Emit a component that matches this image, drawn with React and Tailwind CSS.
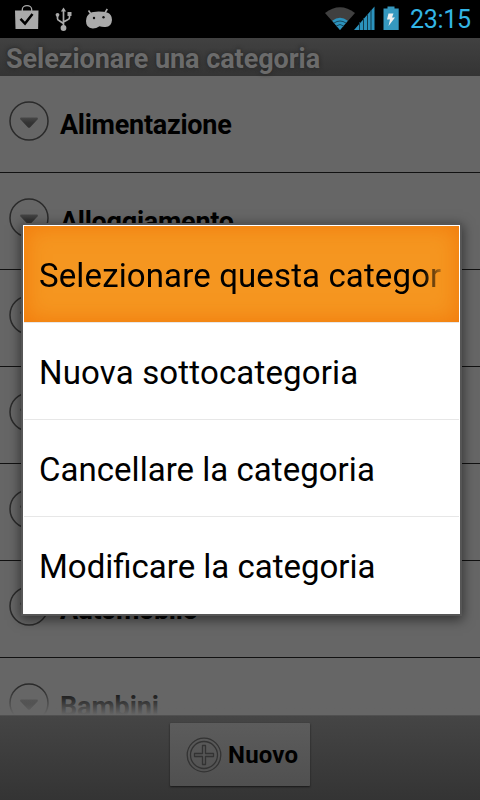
const categories = [
  { name: 'Alimentazione', tracking: 'tracking-[-0.270px]' },
  { name: 'Alloggiamento', tracking: 'tracking-[-0.270px]' },
  { name: 'Animali', tracking: 'tracking-[-0.200px]' },
  { name: 'Assicurazione', tracking: 'tracking-[-0.200px]' },
  { name: 'Attività', tracking: 'tracking-[-0.200px]' },
  { name: 'Automobile', tracking: 'tracking-[-0.300px]' },
  { name: 'Bambini', tracking: 'tracking-[-0.150px]' },
];
const actions = [
  { label: 'Nuova sottocategoria', tracking: 'tracking-[0.160px]' },
  { label: 'Cancellare la categoria', tracking: 'tracking-[0.030px]' },
  { label: 'Modificare la categoria', tracking: 'tracking-normal' },
];

function ExpandIcon() {
  return (
    <svg className="ml-[9px] h-10 w-10 shrink-0" viewBox="0 0 40 40">
      <defs>
        <linearGradient id="arrow" x1="0" y1="0" x2="0" y2="1">
          <stop offset="0" stopColor="#474747" />
          <stop offset="0.500" stopColor="#343434" />
          <stop offset="1" stopColor="#303030" />
        </linearGradient>
      </defs>
      <circle cx="20" cy="20" r="19" fill="none" stroke="#2a2a2a" strokeWidth="1.500" />
      <path d="M11.700 16.500H28.300Q29.500 17 28.500 18.500L21.200 26.200Q20 27.300 18.800 26.200L11.500 18.500Q10.500 17 11.700 16.500z" fill="url(#arrow)" />
    </svg>
  );
}

function StatusBar() {
  return (
    <div className="flex h-[38px] shrink-0 bg-black">
      <svg className="h-[38px] w-[120px]" viewBox="0 0 120 38">
        <path d="M22.300 11v-1.500a4.700 3.800 0 0 1 9.400 0V11" fill="none" stroke="#aaa" strokeWidth="1.300" />
        <path d="M15 10.500h23.500l-.4 18.500H15.500z" fill="#aaa" />
        <path d="M20.500 18.800l4.500 4.700 7.500-9.500" fill="none" stroke="#000" strokeWidth="2.500" />
        <g fill="none" stroke="#aaa" strokeWidth="1.700">
          <path d="M63.500 11v16M57.500 15v3.500q0 1.500 1.500 2l4.500 3M69.500 14v3.500q0 1.500-1.500 2l-4.500 2.500" />
        </g>
        <path d="M63.500 7.500l2.600 4h-5.200z" fill="#aaa" />
        <circle cx="63.500" cy="28" r="2.900" fill="#aaa" />
        <circle cx="57.500" cy="14.800" r="1.900" fill="#aaa" />
        <rect x="67.500" y="12" width="4" height="4" fill="#aaa" />
        <path d="M88.500 10.500l2.800 4M107.300 9l-2.800 4.500" stroke="#aaa" strokeWidth="1.600" />
        <path d="M90.500 13Q93 11.500 98.500 11.500T107 12.500Q112 14 112 20Q111.500 26.800 105.500 27Q102 27.200 99.500 26.200Q96 28.700 92.500 28.500Q86 28 86 21Q86 15.500 90.500 13z" fill="#aaa" />
        <circle cx="94" cy="18" r="1.200" fill="#111" />
        <circle cx="103.500" cy="17.300" r="1.200" fill="#111" />
      </svg>
      <svg className="ml-auto h-[38px] w-[80px]" viewBox="324 0 80 38">
        <path d="M325 13Q340 1.500 355 13L340 30z" fill="#404040" />
        <path d="M332.200 20.800q7.800-6 15.600 0L340 30z" fill="#2b92bd" />
        <path d="M334 23q6-4 12 0M336.200 26q3.800-3 7.600 0" fill="none" stroke="#16475b" strokeWidth="1" />
        <path d="M354 30L374.500 6.500V30z" fill="#2b92bd" />
        <path d="M359.500 22v8M363.500 18v12M367.500 14v16M371 10v20" stroke="#113b4c" strokeWidth="1" />
        <path d="M383.500 8.500h4V6.500h7v2h4.200v21.500h-15.200z" fill="#3598bf" />
        <path d="M388.500 13.500h5l-1.500 4h3l-6.500 8.500 1.500-6.500h-3z" fill="#eee" />
      </svg>
      <div className="w-[76px] pl-[6px] text-[25px] leading-[39px] tracking-[-0.300px] whitespace-nowrap text-[#33b5e5]">23:15</div>
    </div>
  );
}

function ContextMenu() {
  return (
    <div className="absolute top-[223px] left-[21px] h-[393px] w-[441px] border-2 border-[#565656] bg-white text-[33px] text-black shadow-[0_3px_11px_1px_rgba(0,0,0,0.500)]">
      <div className="mx-px flex h-[97px] items-center bg-[#f59620] px-[15px] shadow-[inset_0_1px_0_#fff,inset_0_0_22px_2px_#f27b0c]">
        <div className="w-[406px] bg-[linear-gradient(to_right,#000_384px,transparent_408px)] bg-clip-text pt-1 tracking-[0.130px] whitespace-nowrap text-transparent">
          Selezionare questa categor
        </div>
      </div>
      {actions.map(({ label, tracking }) => (
        <div key={label} className="mx-px flex h-[97px] items-center border-t border-[#e7e7e7] pl-[15px] whitespace-nowrap">
          <span className={`pt-1 ${tracking}`}>{label}</span>
        </div>
      ))}
    </div>
  );
}

export default function App() {
  return (
    <div className="relative flex h-[800px] w-[480px] flex-col overflow-hidden bg-[#666] font-[Roboto,sans-serif]">
      <StatusBar />
      <div className="h-[38px] shrink-0 bg-linear-to-b from-[#414141] to-[#343434] pl-[6px] text-[27px] leading-[42px] font-bold tracking-[-0.050px] text-[#6b6b6b] [text-shadow:0_0_4px_#222]">
        Selezionare una categoria
      </div>
      <div className="relative h-[639px] shrink-0 overflow-hidden">
        {categories.map(({ name, tracking }) => (
          <div key={name} className="flex h-[97px] border-b border-[#111] pt-[25px]">
            <ExpandIcon />
            <span className={`ml-[11px] text-[27px] leading-[48px] font-bold text-black ${tracking}`}>{name}</span>
          </div>
        ))}
        <div className="absolute inset-x-0 bottom-0 h-[28px] bg-linear-to-b from-transparent to-[#666]" />
      </div>
      <div className="flex h-[85px] shrink-0 justify-center border-t border-[#505050] bg-linear-to-b from-[#454545] to-[#343434] pt-[7px]">
        <button className="flex h-[63px] w-[140px] items-center rounded-[1px] bg-linear-to-b from-[#5c5c5c] to-[#505050] pl-[16px] shadow-[0_1px_2px_#181818]">
          <svg className="h-9 w-9" viewBox="0 0 36 36" fill="none" stroke="#333" strokeWidth="1.300">
            <circle cx="18" cy="18" r="16.800" />
            <circle cx="18" cy="18" r="13.500" />
            <path d="M16.500 8.500h3v8h8v3h-8v8h-3v-8h-8v-3h8z" strokeLinejoin="round" />
          </svg>
          <span className="ml-[6px] text-[24px] font-bold tracking-[0.200px] text-black">Nuovo</span>
        </button>
      </div>
      <ContextMenu />
    </div>
  );
}
